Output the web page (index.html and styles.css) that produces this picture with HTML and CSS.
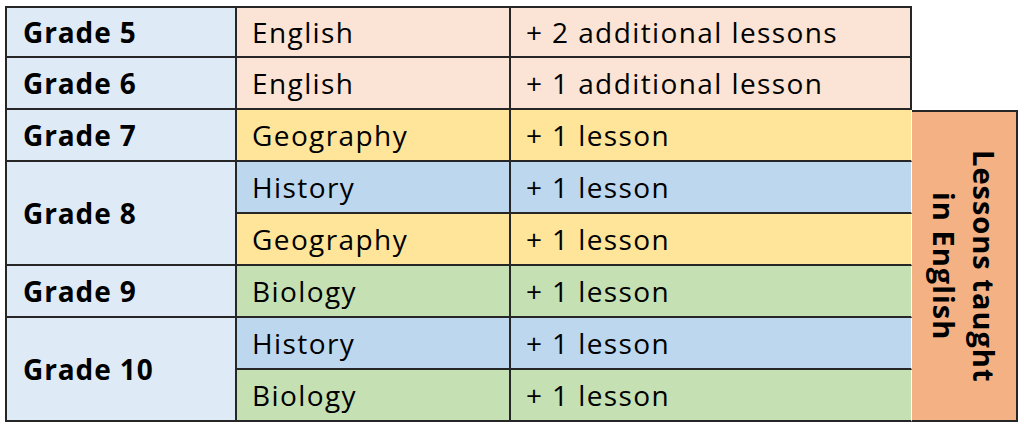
FILE: index.html
```html
<!DOCTYPE html>
<html>
<head>
<meta charset="utf-8">
<link rel="stylesheet" href="styles.css">
</head>
<body>
<div class="wrap">
  <div class="grid">
    <div class="cell grade top first-row">Grade 5</div>
    <div class="cell peach first-row">English</div>
    <div class="cell peach first-row last">+ 2 additional lessons</div>
    <div class="empty"></div>

    <div class="cell grade">Grade 6</div>
    <div class="cell peach">English</div>
    <div class="cell peach last">+ 1 additional lesson</div>
    <div class="empty"></div>

    <div class="cell grade">Grade 7</div>
    <div class="cell yellow">Geography</div>
    <div class="cell yellow open">+ 1 lesson</div>
    <div class="side"><span>Lessons taught<br>in English</span></div>

    <div class="cell grade span2">Grade 8</div>
    <div class="cell blue">History</div>
    <div class="cell blue open">+ 1 lesson</div>
    <div class="cell yellow">Geography</div>
    <div class="cell yellow open">+ 1 lesson</div>

    <div class="cell grade">Grade 9</div>
    <div class="cell green">Biology</div>
    <div class="cell green open">+ 1 lesson</div>

    <div class="cell grade span2">Grade 10</div>
    <div class="cell blue">History</div>
    <div class="cell blue open">+ 1 lesson</div>
    <div class="cell green">Biology</div>
    <div class="cell green open">+ 1 lesson</div>
  </div>
</div>
</body>
</html>
```
FILE: styles.css
```css
html, body {
  margin: 0;
  padding: 0;
  background: #ffffff;
}
.wrap {
  padding: 6px 0 0 5px;
}
.grid {
  display: grid;
  grid-template-columns: 232px 274px 401px 106px;
  grid-template-rows: repeat(8, 52px);
  font-family: "Open Sans", "Liberation Sans", sans-serif;
  font-size: 28px;
  letter-spacing: 1.4px;
  color: #000;
}
.cell {
  box-sizing: border-box;
  display: flex;
  align-items: center;
  padding-left: 15px;
  border-right: 2px solid #262626;
  border-bottom: 2px solid #262626;
  white-space: nowrap;
}
.first-row {
  border-top: 2px solid #262626;
}
.grade {
  grid-column: 1;
  background: #deebf7;
  font-weight: bold;
  letter-spacing: 0.9px;
  border-left: 2px solid #262626;
  padding-left: 16px;
}
.span2 {
  grid-row: span 2;
}
.peach { background: #fbe4d5; }
.yellow { background: #ffe599; }
.blue { background: #bdd7ee; }
.green { background: #c5e0b3; }
.cell.open {
  border-right: 1px solid #ffffff;
}
.empty {
  grid-column: 4;
}
.side {
  grid-column: 4;
  grid-row: 3 / 9;
  box-sizing: border-box;
  background: #f4b183;
  border-top: 2px solid #262626;
  border-right: 2px solid #262626;
  border-bottom: 2px solid #262626;
  display: flex;
  align-items: center;
  justify-content: center;
}
.side span {
  writing-mode: vertical-rl;
  font-weight: bold;
  font-size: 29px;
  letter-spacing: 1px;
  text-align: center;
  line-height: 40px;
}
```
